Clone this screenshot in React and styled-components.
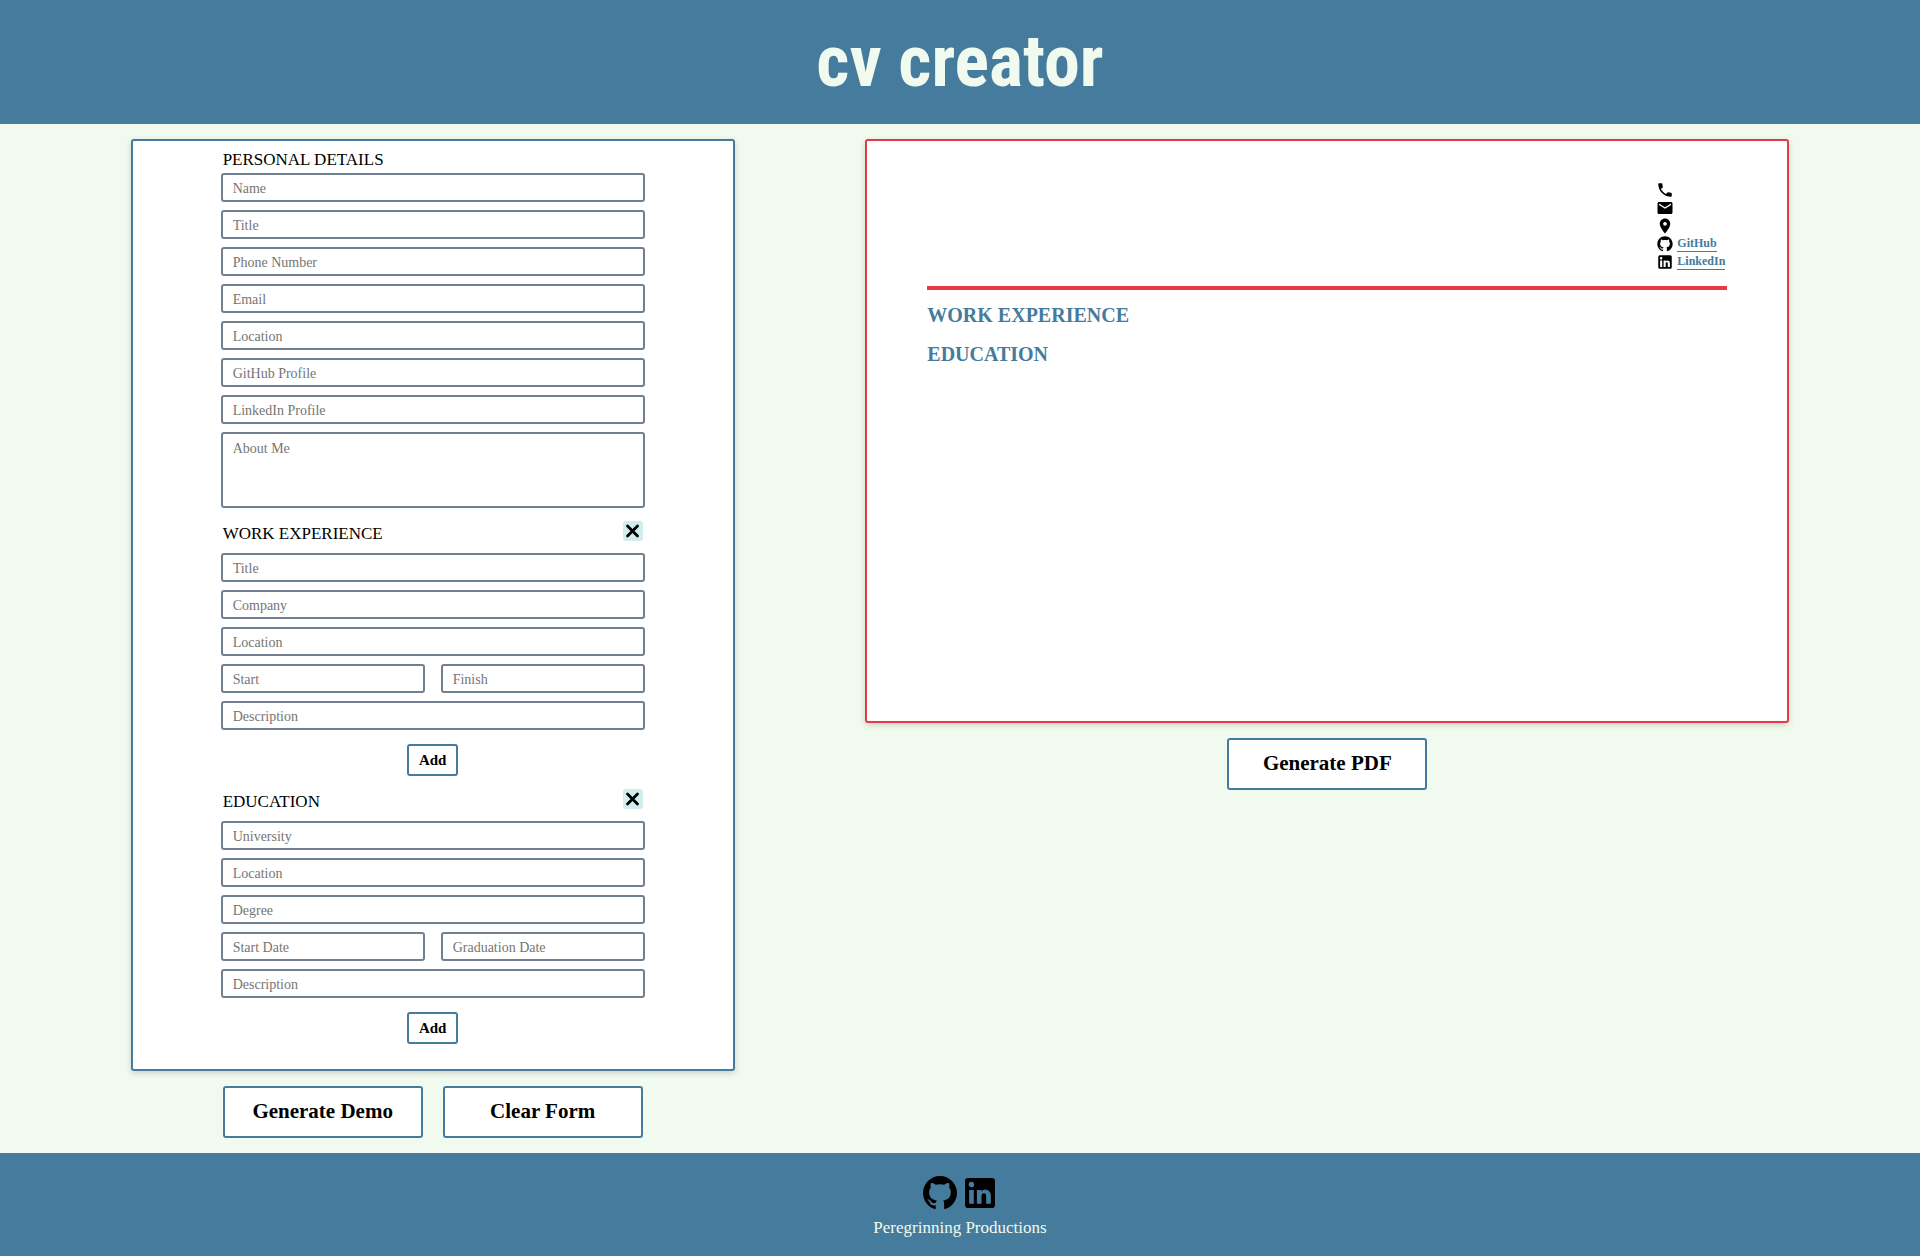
import React, { useState } from "react";
import styled, { createGlobalStyle } from "styled-components";
import { MdPhone, MdEmail, MdLocationOn } from "react-icons/md";

const colors = {
  blue: "#457b9d",
  red: "#e63946",
  cream: "#f1faee",
  slate: "#708090",
};

const serif = `"Liberation Serif", "Times New Roman", serif`;

const GlobalStyle = createGlobalStyle`
  *, *::before, *::after { box-sizing: border-box; }
  body {
    margin: 0;
    background: ${colors.cream};
    font-family: ${serif};
    color: #000;
  }
  h1, h2, h3, p, ul { margin: 0; padding: 0; }
  button, input, textarea { font-family: inherit; }
`;

const Page = styled.div`
  min-height: 100vh;
  display: flex;
  flex-direction: column;
`;

const Header = styled.header`
  background: ${colors.blue};
  color: ${colors.cream};
  padding: 12px 0;
  text-align: center;
`;

const Logo = styled.h1`
  font-family: "Liberation Sans Narrow", "Roboto Condensed", "Liberation Sans", sans-serif;
  font-weight: 700;
  font-size: 72px;
  line-height: 100px;
`;

const Main = styled.main`
  flex: 1;
  display: flex;
  justify-content: space-evenly;
  align-items: flex-start;
  padding: 15px 0;
`;

const Column = styled.div`
  display: flex;
  flex-direction: column;
  align-items: center;
  gap: 15px;
`;

const Panel = styled.section`
  background: #fff;
  border: 2px solid ${(p) => p.$accent};
  border-radius: 3px;
  box-shadow: 0 2px 6px rgba(0, 0, 0, 0.16);
`;

const FormPanel = styled(Panel)`
  width: 604px;
  padding: 6px 88px 25px;
  display: flex;
  flex-direction: column;
  gap: 13px;
`;

const SectionHead = styled.div`
  display: flex;
  justify-content: space-between;
  align-items: flex-start;
  padding: 0 2px;
  margin-bottom: ${(p) => (p.$tight ? 0 : 6)}px;
`;

const SectionTitle = styled.h2`
  font-size: 17px;
  font-weight: 400;
  line-height: 26px;
  text-transform: uppercase;
`;

const Fields = styled.div`
  display: flex;
  flex-direction: column;
  gap: 8px;
`;

const Pair = styled.div`
  display: grid;
  grid-template-columns: 1fr 1fr;
  gap: 16px;
`;

const Input = styled.input`
  width: 100%;
  height: 29px;
  padding: 2px 10px 0;
  border: 2px solid ${colors.slate};
  border-radius: 3px;
  background: #fff;
  font-size: 14px;
  &::placeholder { color: #757575; }
`;

const TextArea = styled.textarea`
  display: block;
  width: 100%;
  height: 76px;
  padding: 7px 10px;
  border: 2px solid ${colors.slate};
  border-radius: 3px;
  background: #fff;
  font-size: 14px;
  line-height: 16px;
  resize: none;
  &::placeholder { color: #757575; }
`;

const RemoveButton = styled.button`
  display: grid;
  place-items: center;
  width: 20px;
  height: 20px;
  padding: 0;
  border: 0;
  border-radius: 3px;
  background: #d3eced;
  cursor: pointer;
`;

const AddButton = styled.button`
  display: block;
  width: 51px;
  height: 32px;
  margin: 14px auto 0;
  padding: 0;
  border: 2px solid ${colors.blue};
  border-radius: 3px;
  background: #fff;
  color: #000;
  font-size: 15px;
  font-weight: 600;
  cursor: pointer;
`;

const Actions = styled.div`
  display: flex;
  gap: 20px;
`;

const ActionButton = styled.button`
  width: 200px;
  height: 52px;
  padding: 0 0 2px;
  border: 2px solid ${colors.blue};
  border-radius: 3px;
  background: #fff;
  color: #000;
  font-size: 21px;
  font-weight: 600;
  cursor: pointer;
`;

const Preview = styled(Panel)`
  width: 924px;
  min-height: 584px;
  padding: 40px 60px;
`;

const PreviewHead = styled.div`
  display: flex;
  justify-content: flex-end;
  padding-bottom: 15px;
  border-bottom: 4px solid ${colors.red};
`;

const Contacts = styled.ul`
  list-style: none;
`;

const Contact = styled.li`
  display: grid;
  grid-template-columns: 18px minmax(50px, auto);
  gap: 3px;
  height: 18px;
  justify-items: start;
  align-items: start;
`;

const ContactLink = styled.a`
  height: 17px;
  border-bottom: 1px solid ${colors.blue};
  color: ${colors.blue};
  font-size: 12px;
  font-weight: 600;
  line-height: 16px;
  text-decoration: none;
`;

const PreviewBody = styled.div`
  display: flex;
  flex-direction: column;
  gap: 15px;
  padding-top: 13px;
`;

const PreviewTitle = styled.h3`
  color: ${colors.blue};
  font-size: 20px;
  font-weight: 700;
  line-height: 24px;
  text-transform: uppercase;
`;

const Footer = styled.footer`
  display: flex;
  flex-direction: column;
  align-items: center;
  gap: 5px;
  padding: 20px 0 18px;
  background: ${colors.blue};
  color: ${colors.cream};
  font-size: 17px;
  line-height: 20px;
`;

const Social = styled.div`
  display: flex;
`;

const SocialLink = styled.a`
  display: block;
  height: 40px;
  color: #000;
`;

const Svg = styled.svg`
  display: block;
  fill: currentColor;
`;

const GitHubIcon = ({ size }) => (
  <Svg width={size} height={size} viewBox="0 0 24 24" aria-hidden="true">
    <g transform="translate(1.8 1.5) scale(0.85)">
      <path d="M12 .297c-6.63 0-12 5.373-12 12 0 5.303 3.438 9.8 8.205 11.385.6.113.82-.258.82-.577 0-.285-.01-1.04-.015-2.04-3.338.724-4.042-1.61-4.042-1.61C4.422 18.07 3.633 17.7 3.633 17.7c-1.087-.744.084-.729.084-.729 1.205.084 1.838 1.236 1.838 1.236 1.07 1.835 2.809 1.305 3.495.998.108-.776.417-1.305.76-1.605-2.665-.3-5.466-1.332-5.466-5.93 0-1.31.465-2.38 1.235-3.22-.135-.303-.54-1.523.105-3.176 0 0 1.005-.322 3.3 1.23.96-.267 1.98-.399 3-.405 1.02.006 2.04.138 3 .405 2.28-1.552 3.285-1.23 3.285-1.23.645 1.653.24 2.873.12 3.176.765.84 1.23 1.91 1.23 3.22 0 4.61-2.805 5.625-5.475 5.92.42.36.81 1.096.81 2.22 0 1.606-.015 2.896-.015 3.286 0 .315.21.69.825.57C20.565 22.092 24 17.592 24 12.297c0-6.627-5.373-12-12-12" />
    </g>
  </Svg>
);

const LinkedInIcon = ({ size }) => (
  <Svg width={size} height={size} viewBox="0 0 24 24" aria-hidden="true">
    <path d="M19 3a2 2 0 0 1 2 2v14a2 2 0 0 1-2 2H5a2 2 0 0 1-2-2V5a2 2 0 0 1 2-2h14m-.5 15.5v-5.3a3.26 3.26 0 0 0-3.26-3.26c-.85 0-1.84.52-2.32 1.3v-1.11h-2.79v8.37h2.79v-4.93c0-.77.62-1.4 1.39-1.4a1.4 1.4 0 0 1 1.4 1.4v4.93h2.79M6.88 8.56a1.68 1.68 0 0 0 1.68-1.68c0-.93-.75-1.69-1.68-1.69a1.69 1.69 0 0 0-1.69 1.69c0 .93.76 1.68 1.69 1.68m1.39 9.94v-8.37H5.5v8.37h2.77z" />
  </Svg>
);

const CloseIcon = () => (
  <svg width="16" height="16" viewBox="0 0 16 16" aria-hidden="true">
    <path d="M2.5 3l10 10M12.500 3l-10 10" stroke="#000" strokeWidth="2.8" strokeLinecap="round" />
  </svg>
);

const Field = ({ name, value, onChange }) => (
  <Input aria-label={name} placeholder={name} value={value} onChange={onChange} />
);

const personalFields = ["Name", "Title", "Phone Number", "Email", "Location", "GitHub Profile", "LinkedIn Profile"];

const repeatable = [
  { title: "Work Experience", top: ["Title", "Company", "Location"], dates: ["Start", "Finish"] },
  { title: "Education", top: ["University", "Location", "Degree"], dates: ["Start Date", "Graduation Date"] },
];

export default function App() {
  const [values, setValues] = useState({});
  const bind = (section, name) => ({
    name,
    value: values[section + name] || "",
    onChange: (e) => setValues({ ...values, [section + name]: e.target.value }),
  });

  return (
    <Page>
      <GlobalStyle />
      <Header>
        <Logo>cv creator</Logo>
      </Header>
      <Main>
        <Column>
          <FormPanel $accent={colors.blue}>
            <div>
              <SectionHead $tight>
                <SectionTitle>Personal Details</SectionTitle>
              </SectionHead>
              <Fields>
                {personalFields.map((f) => (
                  <Field key={f} {...bind("Personal", f)} />
                ))}
                <TextArea
                  aria-label="About Me"
                  placeholder="About Me"
                  value={values.about || ""}
                  onChange={(e) => setValues({ ...values, about: e.target.value })}
                />
              </Fields>
            </div>
            {repeatable.map(({ title, top, dates }) => (
              <div key={title}>
                <SectionHead>
                  <SectionTitle>{title}</SectionTitle>
                  <RemoveButton type="button" aria-label={`Remove ${title}`}>
                    <CloseIcon />
                  </RemoveButton>
                </SectionHead>
                <Fields>
                  {top.map((f) => (
                    <Field key={f} {...bind(title, f)} />
                  ))}
                  <Pair>
                    {dates.map((f) => (
                      <Field key={f} {...bind(title, f)} />
                    ))}
                  </Pair>
                  <Field {...bind(title, "Description")} />
                </Fields>
                <AddButton type="button">Add</AddButton>
              </div>
            ))}
          </FormPanel>
          <Actions>
            <ActionButton type="button">Generate Demo</ActionButton>
            <ActionButton type="button" onClick={() => setValues({})}>Clear Form</ActionButton>
          </Actions>
        </Column>
        <Column>
          <Preview $accent={colors.red}>
            <PreviewHead>
              <Contacts>
                <Contact><MdPhone size={18} /></Contact>
                <Contact><MdEmail size={18} /></Contact>
                <Contact><MdLocationOn size={18} /></Contact>
                <Contact>
                  <GitHubIcon size={18} />
                  <ContactLink href="#github">GitHub</ContactLink>
                </Contact>
                <Contact>
                  <LinkedInIcon size={18} />
                  <ContactLink href="#linkedin">LinkedIn</ContactLink>
                </Contact>
              </Contacts>
            </PreviewHead>
            <PreviewBody>
              <PreviewTitle>Work Experience</PreviewTitle>
              <PreviewTitle>Education</PreviewTitle>
            </PreviewBody>
          </Preview>
          <ActionButton type="button">Generate PDF</ActionButton>
        </Column>
      </Main>
      <Footer>
        <Social>
          <SocialLink href="#github" aria-label="GitHub"><GitHubIcon size={40} /></SocialLink>
          <SocialLink href="#linkedin" aria-label="LinkedIn"><LinkedInIcon size={40} /></SocialLink>
        </Social>
        <p>Peregrinning Productions</p>
      </Footer>
    </Page>
  );
}
